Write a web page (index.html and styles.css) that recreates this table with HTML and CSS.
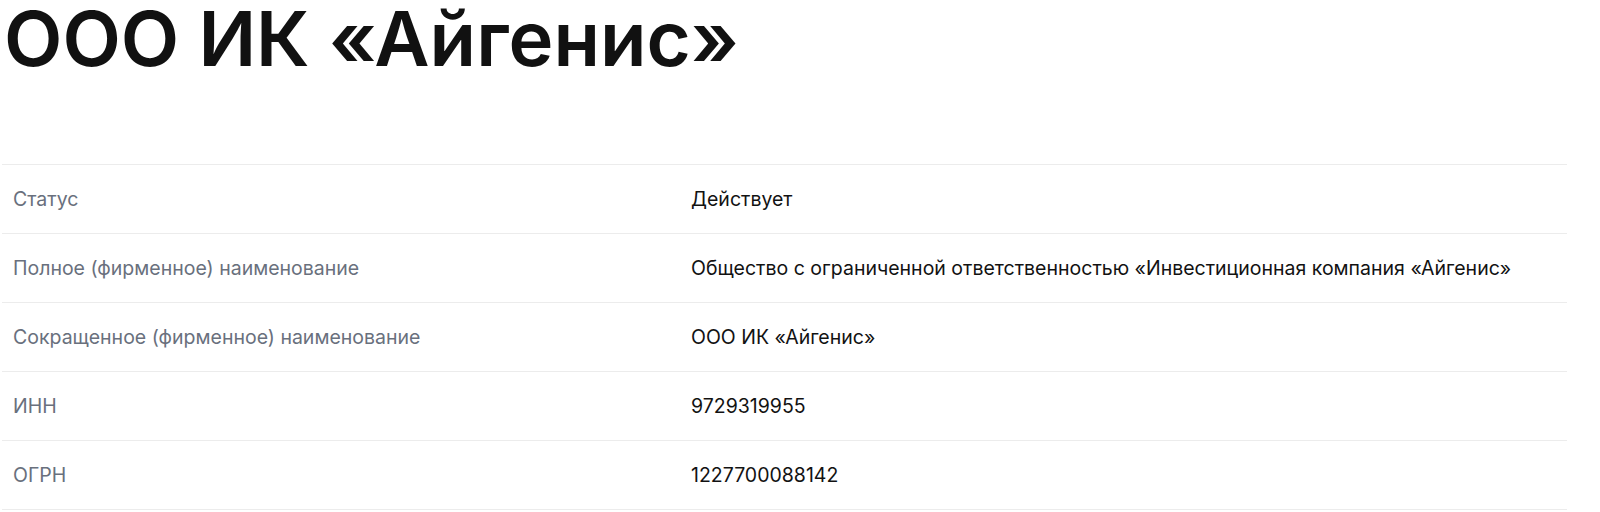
FILE: index.html
```html
<!DOCTYPE html>
<html lang="ru">
<head>
<meta charset="utf-8">
<link rel="stylesheet" href="styles.css">
</head>
<body>
<main class="page">
  <h1 class="title">ООО ИК «Айгенис»</h1>
  <table class="info">
    <tbody>
      <tr><td class="label">Статус</td><td class="value">Действует</td></tr>
      <tr><td class="label">Полное (фирменное) наименование</td><td class="value">Общество с ограниченной ответственностью «Инвестиционная компания «Айгенис»</td></tr>
      <tr><td class="label">Сокращенное (фирменное) наименование</td><td class="value">ООО ИК «Айгенис»</td></tr>
      <tr><td class="label">ИНН</td><td class="value">9729319955</td></tr>
      <tr><td class="label">ОГРН</td><td class="value">1227700088142</td></tr>
    </tbody>
  </table>
</main>
</body>
</html>
```
FILE: styles.css
```css
html, body {
  margin: 0;
  padding: 0;
  background: #ffffff;
}
.page {
  font-family: Inter, "Noto Sans", sans-serif;
  padding: 0 33px 0 2px;
}
.title {
  margin: 0 0 88px 2px;
  font-size: 76px;
  line-height: 76px;
  font-weight: 600;
  color: #111111;
  letter-spacing: 0;
}
.info {
  width: 1565px;
  border-collapse: collapse;
}
.info td {
  height: 68px;
  padding: 0 11px;
  border-top: 1px solid #ececec;
  border-bottom: 1px solid #ececec;
  font-size: 19.5px;
  vertical-align: middle;
}
.label {
  width: 656px;
  color: #69707d;
}
.value {
  color: #121212;
}
```
